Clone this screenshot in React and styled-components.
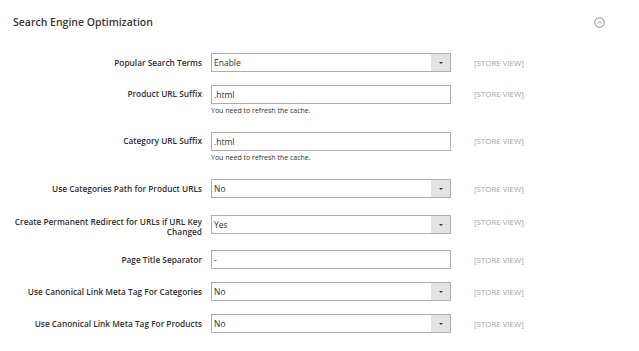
import styled, { createGlobalStyle } from "styled-components";

const GlobalStyle = createGlobalStyle`
  body {
    margin: 0;
    background: #ffffff;
    font-family: "Open Sans", "Liberation Sans", sans-serif;
  }
`;

const Section = styled.section`
  width: 639px;
  height: 351px;
  overflow: hidden;
`;

const Header = styled.div`
  display: flex;
  align-items: center;
  justify-content: space-between;
  padding: 15px 34px 0 13px;
`;

const Title = styled.h2`
  margin: 0;
  font-size: 10.5px;
  line-height: 14px;
  font-weight: 600;
  color: #41362f;
`;

const CollapseIcon = styled.svg`
  width: 11px;
  height: 11px;
  display: block;
`;

const Fields = styled.div`
  display: flex;
  flex-direction: column;
  gap: 13px;
  margin-top: 24px;
`;

const Row = styled.div`
  display: grid;
  grid-template-columns: 202px 240px auto;
  column-gap: 9px;
  align-items: ${(p) => (p.$top ? "start" : "center")};
  padding-top: ${(p) => (p.$wrap ? "4px" : "0")};
`;

const Label = styled.label`
  text-align: right;
  font-size: 8.3px;
  line-height: 10px;
  font-weight: 600;
  color: #303030;
  padding-top: ${(p) => p.$offset || 0}px;
`;

const Control = styled.div`
  display: flex;
  flex-direction: column;
`;

const TextInput = styled.div`
  box-sizing: border-box;
  height: 19px;
  border: 1px solid #adadad;
  padding-left: 2px;
  display: flex;
  align-items: center;
  font-size: 8.5px;
  color: #303030;
  background: #ffffff;
`;

const SelectBox = styled(TextInput)`
  justify-content: space-between;
  align-items: stretch;
`;

const SelectValue = styled.span`
  display: flex;
  align-items: center;
`;

const SelectButton = styled.span`
  width: 19px;
  background: #e3e3e3;
  display: flex;
  align-items: center;
  justify-content: center;

  &::after {
    content: "";
    border-left: 2.5px solid transparent;
    border-right: 2.5px solid transparent;
    border-top: 2.5px solid #41362f;
  }
`;

const Note = styled.div`
  margin: 1px 0 2px;
  font-size: 7px;
  line-height: 12px;
  color: #303030;
`;

const Scope = styled.span`
  padding-left: 14px;
  font-size: 7.9px;
  line-height: 10px;
  color: #a3a3a3;
  text-transform: uppercase;
  padding-top: ${(p) => p.$offset || 0}px;
`;

const fields = [
  { label: "Popular Search Terms", type: "select", value: "Enable" },
  {
    label: "Product URL Suffix",
    type: "text",
    value: ".html",
    note: "You need to refresh the cache.",
  },
  {
    label: "Category URL Suffix",
    type: "text",
    value: ".html",
    note: "You need to refresh the cache.",
  },
  { label: "Use Categories Path for Product URLs", type: "select", value: "No" },
  {
    label: "Create Permanent Redirect for URLs if URL Key Changed",
    type: "select",
    value: "Yes",
    wrap: true,
  },
  { label: "Page Title Separator", type: "text", value: "-" },
  {
    label: "Use Canonical Link Meta Tag For Categories",
    type: "select",
    value: "No",
  },
  {
    label: "Use Canonical Link Meta Tag For Products",
    type: "select",
    value: "No",
  },
];

function Field({ field }) {
  const top = Boolean(field.note || field.wrap);
  const offset = field.note ? 4 : field.wrap ? 2 : 0;
  return (
    <Row $top={top} $wrap={field.wrap}>
      <Label $offset={offset}>{field.label}</Label>
      <Control>
        {field.type === "select" ? (
          <SelectBox>
            <SelectValue>{field.value}</SelectValue>
            <SelectButton />
          </SelectBox>
        ) : (
          <TextInput>{field.value}</TextInput>
        )}
        {field.note && <Note>{field.note}</Note>}
      </Control>
      <Scope $offset={offset}>[Store View]</Scope>
    </Row>
  );
}

export default function App() {
  return (
    <Section>
      <GlobalStyle />
      <Header>
        <Title>Search Engine Optimization</Title>
        <CollapseIcon viewBox="0 0 11 11">
          <circle cx="5.5" cy="5.5" r="4.8" fill="none" stroke="#7a7a7a" strokeWidth="0.9" />
          <path d="M3.6 6.4 L5.5 4.6 L7.4 6.4" fill="none" stroke="#7a7a7a" strokeWidth="0.9" />
        </CollapseIcon>
      </Header>
      <Fields>
        {fields.map((f) => (
          <Field key={f.label} field={f} />
        ))}
      </Fields>
    </Section>
  );
}
